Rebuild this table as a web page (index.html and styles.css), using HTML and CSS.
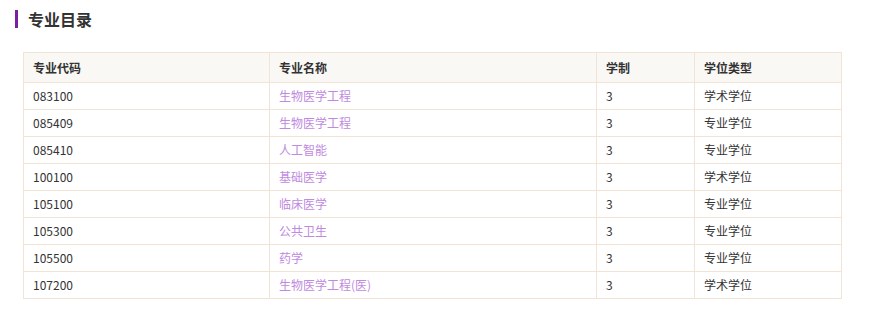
FILE: index.html
```html
<!DOCTYPE html>
<html lang="zh">
<head>
<meta charset="utf-8">
<link rel="stylesheet" href="styles.css">
</head>
<body>
<div class="page">
  <h2 class="title">专业目录</h2>
  <table class="majors">
    <thead>
      <tr><th class="c1">专业代码</th><th class="c2">专业名称</th><th class="c3">学制</th><th class="c4">学位类型</th></tr>
    </thead>
    <tbody>
      <tr><td>083100</td><td><a href="#">生物医学工程</a></td><td>3</td><td>学术学位</td></tr>
      <tr><td>085409</td><td><a href="#">生物医学工程</a></td><td>3</td><td>专业学位</td></tr>
      <tr><td>085410</td><td><a href="#">人工智能</a></td><td>3</td><td>专业学位</td></tr>
      <tr><td>100100</td><td><a href="#">基础医学</a></td><td>3</td><td>学术学位</td></tr>
      <tr><td>105100</td><td><a href="#">临床医学</a></td><td>3</td><td>专业学位</td></tr>
      <tr><td>105300</td><td><a href="#">公共卫生</a></td><td>3</td><td>专业学位</td></tr>
      <tr><td>105500</td><td><a href="#">药学</a></td><td>3</td><td>专业学位</td></tr>
      <tr><td>107200</td><td><a href="#">生物医学工程(医)</a></td><td>3</td><td>学术学位</td></tr>
    </tbody>
  </table>
</div>
</body>
</html>
```
FILE: styles.css
```css
html, body {
  margin: 0;
  padding: 0;
  background: #fff;
}
.page {
  padding: 10px 41px 0 23px;
  font-family: "Microsoft YaHei", "Noto Sans CJK SC", "Noto Sans", sans-serif;
  color: #333;
}
.title {
  margin: 0 0 0 -8px;
  padding-left: 10px;
  border-left: 3px solid #7b1fa2;
  font-size: 16px;
  font-weight: bold;
  line-height: 18px;
  color: #333;
  height: 18px;
}
.majors {
  margin-top: 24px;
  width: 819px;
  border-collapse: collapse;
  table-layout: fixed;
  font-size: 12px;
}
.majors th, .majors td {
  box-sizing: border-box;
  border: 1px solid #f1e4d5;
  text-align: left;
  padding: 0 9px;
  height: 27px;
  line-height: 16px;
}
.majors th {
  background: #faf8f5;
  font-weight: bold;
  height: 30px;
}
.c1 { width: 246px; }
.c2 { width: 327px; }
.c3 { width: 98px; }
.majors a {
  color: #c08ae0;
  text-decoration: none;
}
```
